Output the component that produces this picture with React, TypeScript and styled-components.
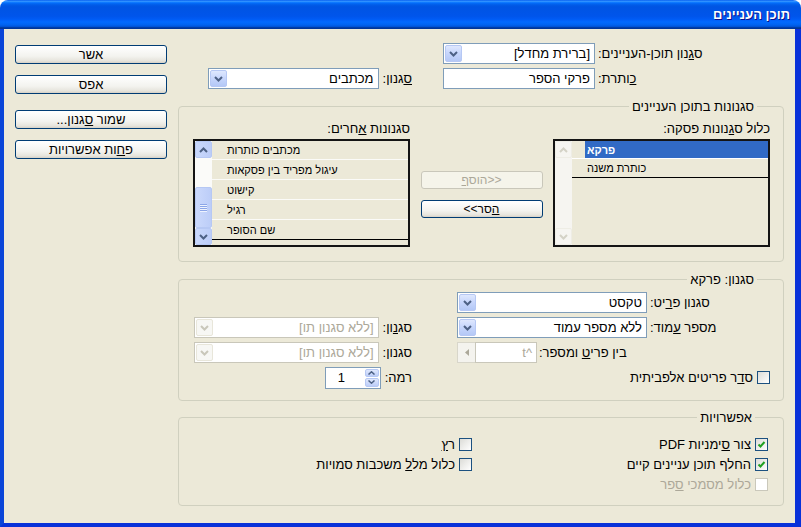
import React from 'react';
import styled, { createGlobalStyle } from 'styled-components';

const GlobalStyle = createGlobalStyle`
  html, body {
    margin: 0;
    padding: 0;
    background: #ffffff;
  }
  body {
    font-family: "Liberation Sans", "DejaVu Sans", Arial, sans-serif;
    font-size: 13px;
    color: #000;
  }
  * {
    box-sizing: border-box;
  }
`;

const Window = styled.div`
  width: 801px;
  height: 527px;
  display: flex;
  flex-direction: column;
`;

const TitleBar = styled.div`
  height: 29px;
  flex: none;
  display: flex;
  align-items: center;
  padding: 0 11px 1px;
  border-radius: 8px 8px 0 0;
  background: linear-gradient(
    180deg,
    #0058ee 0%,
    #3593ff 4%,
    #288eff 6%,
    #127dff 8%,
    #036ffc 10%,
    #0262ee 14%,
    #0057e5 20%,
    #0054e3 24%,
    #0055eb 56%,
    #005bf5 66%,
    #026afe 76%,
    #0062ef 86%,
    #0052d6 92%,
    #0040ab 94%,
    #003092 100%
  );
`;

const TitleText = styled.span`
  color: #fff;
  font-weight: bold;
  font-size: 13px;
  text-shadow: 1px 1px #0f1089;
`;

const Body = styled.div`
  flex: 1;
  display: flex;
  align-items: flex-start;
  gap: 11px;
  padding: 14px 11px 0 11px;
  background: #ece9d8;
  border-style: solid;
  border-width: 0 6px 4px 4px;
  border-color: #0831d9 #0831d9 #0831d9 #0a45d8;
`;

const MainColumn = styled.div`
  width: 606px;
  flex: none;
  display: flex;
  flex-direction: column;
`;

const ButtonColumn = styled.div`
  width: 152px;
  flex: none;
  display: flex;
  flex-direction: column;
  padding-top: 2px;
`;

const XPButton = styled.button<{ $mt?: number; $h?: number; $small?: boolean }>`
  display: block;
  width: 100%;
  height: ${p => p.$h ?? 19}px;
  margin: ${p => p.$mt ?? 0}px 0 0;
  padding: 0;
  font-family: inherit;
  font-size: ${p => (p.$small ? 12 : 13)}px;
  line-height: 1;
  color: #000;
  border: 1px solid #003c74;
  border-radius: 3px;
  background: linear-gradient(180deg, #ffffff 0%, #f3f3ef 60%, #e6e4dc 88%, #d6d0c5 100%);
  &:disabled {
    color: #aca899;
    border-color: #c9c7ba;
    background: #f5f4ea;
  }
`;

const Mn = styled.span`
  text-decoration: underline;
`;

const Label = styled.span`
  white-space: nowrap;
  line-height: 15px;
  flex: none;
`;

const TopSection = styled.div`
  display: flex;
  justify-content: space-between;
  padding: 0 17px 0 15px;
`;

const FieldStack = styled.div<{ $w: number }>`
  width: ${p => p.$w}px;
  display: flex;
  flex-direction: column;
  gap: 4px;
`;

const FieldRow = styled.div<{ $pack?: 'start' | 'end'; $gap?: number }>`
  height: 21px;
  display: flex;
  align-items: center;
  justify-content: ${p => (p.$pack === 'end' ? 'flex-end' : 'flex-start')};
  gap: ${p => p.$gap ?? 3}px;
`;

const Combo = styled.div<{ $w: number; $disabled?: boolean }>`
  width: ${p => p.$w}px;
  height: 21px;
  flex: none;
  display: flex;
  padding: 1px;
  border: 1px solid ${p => (p.$disabled ? '#c9c7ba' : '#7f9db9')};
  background: #fff;
`;

const ComboText = styled.span<{ $disabled?: boolean }>`
  flex: 1;
  display: flex;
  align-items: center;
  padding: 0 3px;
  white-space: nowrap;
  overflow: hidden;
  color: ${p => (p.$disabled ? '#aca899' : '#000')};
`;

const DropButton = styled.span<{ $disabled?: boolean }>`
  flex: none;
  width: 17px;
  display: flex;
  align-items: center;
  justify-content: center;
  border-radius: 2px;
  border: 1px solid ${p => (p.$disabled ? '#e8e6da' : '#b6c8f4')};
  background: ${p =>
    p.$disabled
      ? '#f7f7f4'
      : 'linear-gradient(180deg, #dfe8fe 0%, #c8d7fc 45%, #b4c8f6 100%)'};
`;

const Chevron = ({ up = false, color = '#4d6185' }: { up?: boolean; color?: string }) => (
  <svg width="9" height="6" viewBox="0 0 9 6">
    <path
      d={up ? 'M1 5 L4.5 1.5 L8 5' : 'M1 1 L4.5 4.5 L8 1'}
      fill="none"
      stroke={color}
      strokeWidth="2"
    />
  </svg>
);

const ComboBox = ({ w, text, disabled }: { w: number; text: string; disabled?: boolean }) => (
  <Combo $w={w} $disabled={disabled}>
    <ComboText $disabled={disabled}>{text}</ComboText>
    <DropButton $disabled={disabled}>
      <Chevron color={disabled ? '#c9c7ba' : '#4d6185'} />
    </DropButton>
  </Combo>
);

const GroupBox = styled.fieldset<{ $mt: number; $pad: string }>`
  margin: ${p => p.$mt}px 0 0;
  padding: ${p => p.$pad};
  border: 1px solid #d0d0bf;
  border-radius: 4px;
  min-width: 0;
`;

const Legend = styled.legend`
  padding: 0 3px;
  margin-right: 13px;
  line-height: 15px;
  font-size: 13px;
`;

const StylesRow = styled.div`
  display: flex;
  justify-content: space-between;
`;

const ListColumn = styled.div`
  width: 217px;
  display: flex;
  flex-direction: column;
  gap: 3px;
`;

const ListBox = styled.div`
  height: 108px;
  display: flex;
  direction: ltr;
  border: 2px solid #141414;
  background: #ece9d8;
`;

const ScrollBar = styled.div<{ $disabled?: boolean }>`
  width: 17px;
  flex: none;
  display: flex;
  flex-direction: column;
  background: ${p => (p.$disabled ? '#f6f5f1' : '#fbfbf9')};
`;

const ScrollBtn = styled.span<{ $disabled?: boolean }>`
  height: 17px;
  flex: none;
  display: flex;
  align-items: center;
  justify-content: center;
  border-radius: 2px;
  border: 1px solid ${p => (p.$disabled ? '#eeede5' : '#b6c8f4')};
  background: ${p =>
    p.$disabled ? '#f6f5f1' : 'linear-gradient(90deg, #c9d8fc 0%, #bccdf8 100%)'};
`;

const ScrollTrack = styled.span`
  flex: 1;
`;

const Thumb = styled.span`
  height: 41px;
  flex: none;
  display: flex;
  flex-direction: column;
  align-items: center;
  justify-content: center;
  gap: 1px;
  border-radius: 2px;
  border: 1px solid #b6c8f4;
  background: linear-gradient(90deg, #cbd9fc 0%, #bccdf8 100%);
`;

const Grip = styled.span`
  width: 7px;
  height: 1px;
  background: #8ca6e8;
  box-shadow: 0 1px 0 #eef3fe;
`;

const ListRows = styled.div`
  flex: 1;
  display: flex;
  flex-direction: column;
`;

const ListRow = styled.div<{ $h: number; $line: string }>`
  height: ${p => p.$h}px;
  flex: none;
  display: flex;
  border-bottom: 1px solid ${p => p.$line};
  font-size: 11px;
`;

const RowGutter = styled.span`
  width: 13px;
  flex: none;
`;

const RowText = styled.span<{ $selected?: boolean }>`
  flex: 1;
  display: flex;
  align-items: center;
  padding-left: 2px;
  background: ${p => (p.$selected ? '#316ac5' : 'transparent')};
  color: ${p => (p.$selected ? '#fff' : '#000')};
  font-weight: ${p => (p.$selected ? 'bold' : 'normal')};
`;

const MoveButtons = styled.div`
  width: 122px;
  display: flex;
  flex-direction: column;
  padding-top: 50px;
  gap: 11px;
`;

const EntryGrid = styled.div`
  display: grid;
  grid-template-columns: 313px 219px;
  column-gap: 45px;
  row-gap: 4px;
  grid-auto-rows: 21px;
`;

const SepField = styled.div`
  width: 80px;
  height: 21px;
  display: flex;
  flex: none;
`;

const SepInput = styled.span`
  flex: 1;
  display: flex;
  align-items: center;
  padding: 0 4px;
  border: 1px solid #c9c7ba;
  background: #fff;
  color: #aca899;
`;

const SepArrow = styled.span`
  width: 18px;
  flex: none;
  display: flex;
  align-items: center;
  justify-content: center;
  border: 1px solid #d8d6ca;
  border-right: none;
  background: #f4f3ee;
`;

const Spinner = styled.div`
  width: 56px;
  height: 22px;
  flex: none;
  display: flex;
  padding: 1px;
  border: 1px solid #7f9db9;
  background: #fff;
`;

const SpinButtons = styled.div`
  width: 14px;
  display: flex;
  flex-direction: column;
  gap: 1px;
`;

const SpinBtn = styled.span`
  flex: 1;
  display: flex;
  align-items: center;
  justify-content: center;
  border-radius: 2px;
  border: 1px solid #b6c8f4;
  background: linear-gradient(180deg, #dfe8fe 0%, #bccdf8 100%);
`;

const SpinValue = styled.span`
  flex: 1;
  display: flex;
  align-items: center;
  direction: ltr;
  padding-left: 11px;
`;

const CheckRow = styled.label<{ $disabled?: boolean }>`
  height: 20px;
  display: flex;
  align-items: center;
  gap: 4px;
  color: ${p => (p.$disabled ? '#aca899' : '#000')};
  white-space: nowrap;
`;

const Box = styled.span<{ $disabled?: boolean }>`
  width: 13px;
  height: 13px;
  flex: none;
  display: flex;
  align-items: center;
  justify-content: center;
  border: 1px solid ${p => (p.$disabled ? '#cac8bb' : '#1c5180')};
  background: ${p =>
    p.$disabled ? '#fff' : 'linear-gradient(135deg, #dcdcd7 0%, #ffffff 100%)'};
`;

const CheckBox = ({
  checked,
  disabled,
  children,
}: {
  checked?: boolean;
  disabled?: boolean;
  children: React.ReactNode;
}) => (
  <CheckRow $disabled={disabled}>
    <Box $disabled={disabled}>
      {checked && (
        <svg width="9" height="9" viewBox="0 0 9 9">
          <path d="M1.5 4.5 L3.5 6.5 L7.5 2" fill="none" stroke="#21a121" strokeWidth="2" />
        </svg>
      )}
    </Box>
    <span>{children}</span>
  </CheckRow>
);

const OptionsGrid = styled.div`
  display: grid;
  grid-template-columns: 296px 1fr;
`;

const OptionColumn = styled.div`
  display: flex;
  flex-direction: column;
`;

const Spacer = styled.div``;

const tocStyles = [{ text: 'פרקא', selected: true }, { text: 'כותרת משנה' }];
const otherStyles = ['מכתבים כותרות', 'עיגול מפריד בין פסקאות', 'קישוט', 'רגיל', 'שם הסופר'];

export default function App() {
  return (
    <>
      <GlobalStyle />
      <Window dir="rtl">
        <TitleBar>
          <TitleText>תוכן העניינים</TitleText>
        </TitleBar>
        <Body>
          <MainColumn>
            <TopSection>
              <FieldStack $w={324}>
                <FieldRow $pack="end">
                  <Label>
                    ס<Mn>ג</Mn>נון תוכן-העניינים:
                  </Label>
                  <ComboBox w={152} text="[ברירת מחדל]" />
                </FieldRow>
                <FieldRow $pack="end">
                  <Label>
                    <Mn>כ</Mn>ותרת:
                  </Label>
                  <Combo $w={152}>
                    <ComboText>פרקי הספר</ComboText>
                  </Combo>
                </FieldRow>
              </FieldStack>
              <FieldStack $w={219}>
                <FieldRow />
                <FieldRow $gap={4}>
                  <Label>
                    <Mn>ס</Mn>גנון:
                  </Label>
                  <ComboBox w={171} text="מכתבים" />
                </FieldRow>
              </FieldStack>
            </TopSection>

            <GroupBox $mt={10} $pad="7px 13px 14px 14px">
              <Legend>סגנונות בתוכן העניינים</Legend>
              <StylesRow>
                <ListColumn>
                  <Label>
                    כלול ס<Mn>ג</Mn>נונות פסקה:
                  </Label>
                  <ListBox>
                    <ScrollBar $disabled>
                      <ScrollBtn $disabled>
                        <Chevron up color="#d4d2c6" />
                      </ScrollBtn>
                      <ScrollTrack />
                      <ScrollBtn $disabled>
                        <Chevron color="#d4d2c6" />
                      </ScrollBtn>
                    </ScrollBar>
                    <ListRows>
                      {tocStyles.map((s, i) => (
                        <ListRow
                          key={s.text}
                          $h={i === 0 ? 18 : 19}
                          $line={i === tocStyles.length - 1 ? '#000' : '#fff'}
                        >
                          <RowGutter />
                          <RowText $selected={s.selected}>{s.text}</RowText>
                        </ListRow>
                      ))}
                    </ListRows>
                  </ListBox>
                </ListColumn>

                <MoveButtons>
                  <XPButton $h={18} $small disabled>
                    {'<<הוס'}
                    <Mn>ף</Mn>
                  </XPButton>
                  <XPButton $h={18} $small>
                    <Mn>ה</Mn>
                    {'סר>>'}
                  </XPButton>
                </MoveButtons>

                <ListColumn>
                  <Label>
                    סגנונות <Mn>א</Mn>חרים:
                  </Label>
                  <ListBox>
                    <ScrollBar>
                      <ScrollBtn>
                        <Chevron up />
                      </ScrollBtn>
                      <ScrollTrack />
                      <Thumb>
                        <Grip />
                        <Grip />
                        <Grip />
                        <Grip />
                      </Thumb>
                      <ScrollBtn>
                        <Chevron />
                      </ScrollBtn>
                    </ScrollBar>
                    <ListRows>
                      {otherStyles.map((s, i) => (
                        <ListRow
                          key={s}
                          $h={i === 0 ? 19 : 20}
                          $line={i === otherStyles.length - 1 ? '#000' : '#fbfbf8'}
                        >
                          <RowGutter />
                          <RowText>{s}</RowText>
                        </ListRow>
                      ))}
                    </ListRows>
                  </ListBox>
                </ListColumn>
              </StylesRow>
            </GroupBox>

            <GroupBox $mt={10} $pad="5px 13px 12px 14px">
              <Legend>סגנון: פרקא</Legend>
              <EntryGrid>
                <FieldRow $pack="end">
                  <Label>
                    סגנון פ<Mn>ר</Mn>יט:
                  </Label>
                  <ComboBox w={190} text="טקסט" />
                </FieldRow>
                <Spacer />

                <FieldRow $pack="end">
                  <Label>
                    מספר <Mn>ע</Mn>מוד:
                  </Label>
                  <ComboBox w={190} text="ללא מספר עמוד" />
                </FieldRow>
                <FieldRow $gap={4}>
                  <Label>
                    סג<Mn>נ</Mn>ון:
                  </Label>
                  <ComboBox w={185} text="[ללא סגנון תו]" disabled />
                </FieldRow>

                <FieldRow $pack="end" $gap={2}>
                  <Label>
                    בין פרי<Mn>ט</Mn> ומספר:
                  </Label>
                  <SepField>
                    <SepInput>^t</SepInput>
                    <SepArrow>
                      <svg width="4" height="7" viewBox="0 0 4 7">
                        <path d="M4 0 L0 3.5 L4 7 Z" fill="#aca899" />
                      </svg>
                    </SepArrow>
                  </SepField>
                </FieldRow>
                <FieldRow $gap={4}>
                  <Label>
                    סגנו<Mn>ן</Mn>:
                  </Label>
                  <ComboBox w={185} text="[ללא סגנון תו]" disabled />
                </FieldRow>

                <FieldRow>
                  <CheckBox>
                    ס<Mn>ד</Mn>ר פריטים אלפביתית
                  </CheckBox>
                </FieldRow>
                <FieldRow $gap={4}>
                  <Label>רמה:</Label>
                  <Spinner>
                    <SpinButtons>
                      <SpinBtn>
                        <svg width="7" height="4" viewBox="0 0 7 4">
                          <path d="M0.5 3.5 L3.5 0.8 L6.5 3.5" fill="none" stroke="#4d6185" strokeWidth="1.5" />
                        </svg>
                      </SpinBtn>
                      <SpinBtn>
                        <svg width="7" height="4" viewBox="0 0 7 4">
                          <path d="M0.5 0.5 L3.5 3.2 L6.5 0.5" fill="none" stroke="#4d6185" strokeWidth="1.5" />
                        </svg>
                      </SpinBtn>
                    </SpinButtons>
                    <SpinValue>1</SpinValue>
                  </Spinner>
                </FieldRow>
              </EntryGrid>
            </GroupBox>

            <GroupBox $mt={9} $pad="9px 15px 11px 14px">
              <Legend>אפשרויות</Legend>
              <OptionsGrid>
                <OptionColumn>
                  <CheckBox checked>
                    צור <Mn>ס</Mn>ימניות PDF
                  </CheckBox>
                  <CheckBox checked>החלף תוכן עניינים קיים</CheckBox>
                  <CheckBox disabled>
                    כלול מסמכי <Mn>ס</Mn>פר
                  </CheckBox>
                </OptionColumn>
                <OptionColumn>
                  <CheckBox>
                    ר<Mn>ץ</Mn>
                  </CheckBox>
                  <CheckBox>
                    כלול מל<Mn>ל</Mn> משכבות סמויות
                  </CheckBox>
                </OptionColumn>
              </OptionsGrid>
            </GroupBox>
          </MainColumn>

          <ButtonColumn>
            <XPButton>אשר</XPButton>
            <XPButton $mt={11}>אפס</XPButton>
            <XPButton $mt={16}>
              שמור <Mn>ס</Mn>גנון...
            </XPButton>
            <XPButton $mt={11}>
              פ<Mn>ח</Mn>ות אפשרויות
            </XPButton>
          </ButtonColumn>
        </Body>
      </Window>
    </>
  );
}
